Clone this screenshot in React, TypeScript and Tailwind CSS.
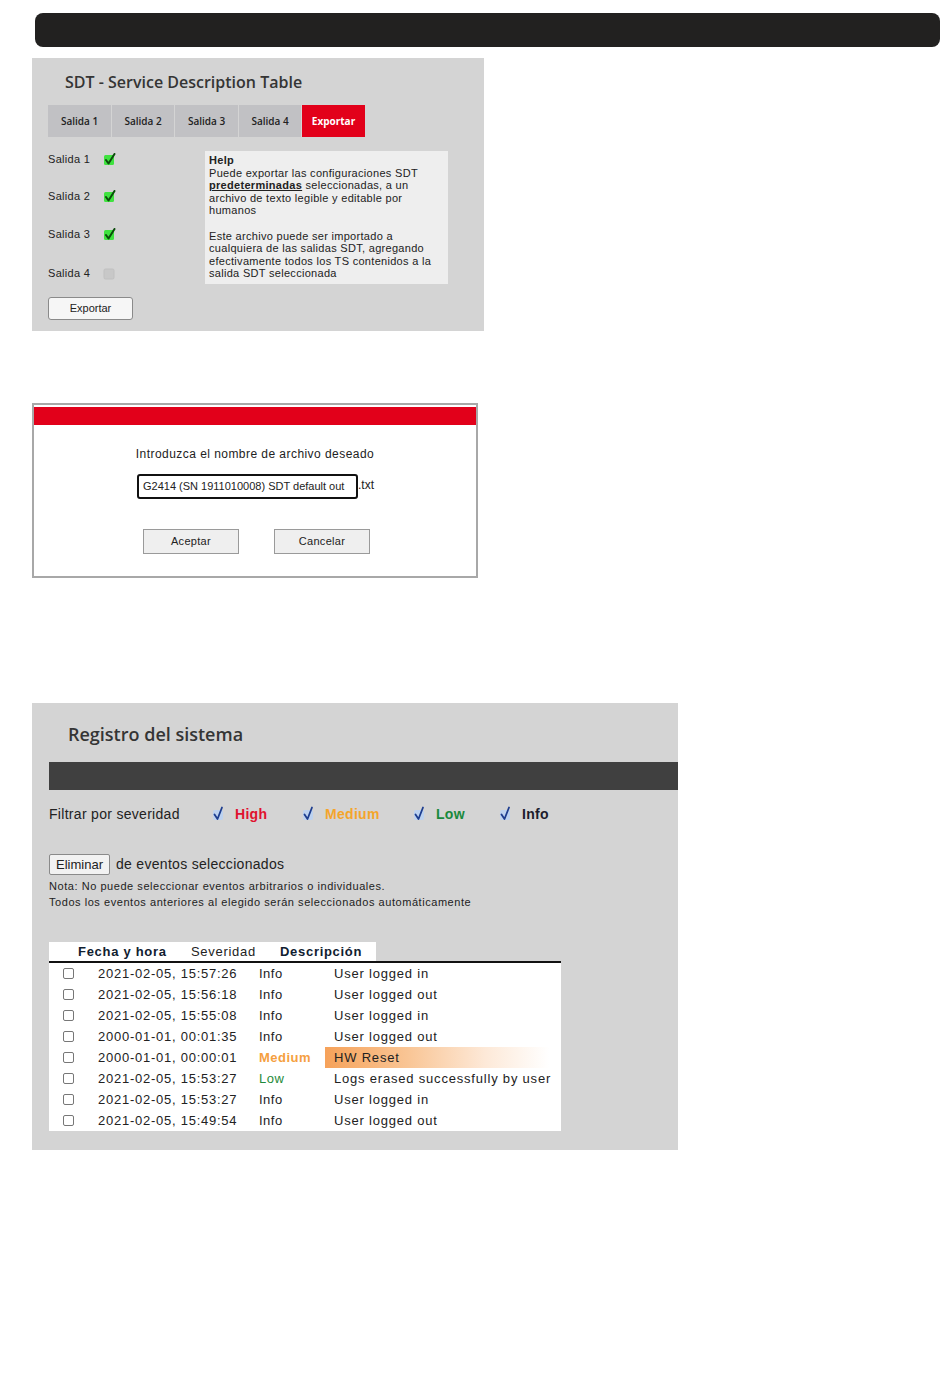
import React from 'react';

const body = "font-['Liberation_Sans',Arial,sans-serif]";
const heading = "font-['Open_Sans','Liberation_Sans',sans-serif]";

const GreenCheck: React.FC<{ on: boolean }> = ({ on }) => (
    <svg width="13" height="13" viewBox="0 0 13 13" className="shrink-0">
        {on ? (
            <>
                <rect x="1" y="2" width="10" height="10" rx="1.5" fill="#3fe23f" />
                <path d="M3 7 L5.5 10.5 L11.5 1" stroke="#0b4d0b" strokeWidth="2" fill="none" strokeLinecap="round" strokeLinejoin="round" />
            </>
        ) : (
            <rect x="1" y="2" width="10" height="10" rx="1.5" fill="#c8c8c8" stroke="#c0c0c0" />
        )}
    </svg>
);

const BlueCheck: React.FC = () => (
    <svg width="16" height="16" viewBox="0 0 16 16" className="shrink-0">
        <rect x="2" y="4" width="10" height="10" rx="2" fill="#bcd2f0" />
        <path d="M3.5 8.5 L6.5 13 L11 1.5" stroke="#1d3d8f" strokeWidth="1.8" fill="none" strokeLinecap="round" strokeLinejoin="round" />
    </svg>
);

const tabs = ['Salida 1', 'Salida 2', 'Salida 3', 'Salida 4'];

const salidas = [
    { name: 'Salida 1', on: true, h: 'h-[37px]' },
    { name: 'Salida 2', on: true, h: 'h-[37px]' },
    { name: 'Salida 3', on: true, h: 'h-[39px]' },
    { name: 'Salida 4', on: false, h: 'h-[38px]' },
];

const filters = [
    { label: 'High', color: 'text-[#e0122e]', w: 'w-[90px]' },
    { label: 'Medium', color: 'text-[#f5a52a]', w: 'w-[111px]' },
    { label: 'Low', color: 'text-[#1a8a3c]', w: 'w-[86px]' },
    { label: 'Info', color: 'text-[#1c1c2c]', w: 'w-[70px]' },
];

type Sev = 'Info' | 'Medium' | 'Low';

const events: { date: string; sev: Sev; desc: string }[] = [
    { date: '2021-02-05, 15:57:26', sev: 'Info', desc: 'User logged in' },
    { date: '2021-02-05, 15:56:18', sev: 'Info', desc: 'User logged out' },
    { date: '2021-02-05, 15:55:08', sev: 'Info', desc: 'User logged in' },
    { date: '2000-01-01, 00:01:35', sev: 'Info', desc: 'User logged out' },
    { date: '2000-01-01, 00:00:01', sev: 'Medium', desc: 'HW Reset' },
    { date: '2021-02-05, 15:53:27', sev: 'Low', desc: 'Logs erased successfully by user' },
    { date: '2021-02-05, 15:53:27', sev: 'Info', desc: 'User logged in' },
    { date: '2021-02-05, 15:49:54', sev: 'Info', desc: 'User logged out' },
];

const sevColor: Record<Sev, string> = {
    Info: 'text-[#222]',
    Medium: 'text-[#f5a040] font-bold',
    Low: 'text-[#1f8a3a]',
};

const SdtPanel: React.FC = () => (
    <div className="ml-[32px] w-[452px] h-[273px] bg-[#d4d4d4] pl-[16px] flex flex-col">
        <div className={`${heading} h-[47px] pl-[17px] pt-[13px] text-[16px] font-semibold text-[#353535] leading-[22px]`}>
            SDT - Service Description Table
        </div>
        <div className="flex h-[32px]">
            {tabs.map((t, i) => (
                <div
                    key={t}
                    className={`${heading} ${i === 1 || i === 3 ? 'w-[62px]' : 'w-[63px]'} mr-px bg-[#c1c1c4] flex items-center justify-center text-[10px] font-semibold text-[#222]`}
                >
                    {t}
                </div>
            ))}
            <div className={`${heading} w-[63px] bg-[#e2001a] flex items-center justify-center text-[10px] font-bold text-white`}>
                Exportar
            </div>
        </div>
        <div className="flex mt-[4px]">
            <div className="w-[157px] flex flex-col">
                {salidas.map(s => (
                    <div key={s.name} className={`${s.h} flex items-center gap-[13px] ${body} text-[11px] text-[#222] tracking-[0.3px]`}>
                        <span>{s.name}</span>
                        <GreenCheck on={s.on} />
                    </div>
                ))}
            </div>
            <div className={`mt-[10px] w-[243px] h-[133px] bg-[#eeeeee] px-[4px] pt-[3px] ${body} text-[11px] leading-[12.6px] text-[#222] tracking-[0.3px] whitespace-nowrap`}>
                <div className="font-bold">Help</div>
                <div>Puede exportar las configuraciones SDT</div>
                <div>
                    <span className="font-bold underline">predeterminadas</span> seleccionadas, a un
                </div>
                <div>archivo de texto legible y editable por</div>
                <div>humanos</div>
                <div className="h-[12.6px]" />
                <div>Este archivo puede ser importado a</div>
                <div>cualquiera de las salidas SDT, agregando</div>
                <div>efectivamente todos los TS contenidos a la</div>
                <div>salida SDT seleccionada</div>
            </div>
        </div>
        <button className={`mt-[5px] w-[85px] h-[23px] bg-[#f6f6f6] border border-[#8a8a8a] rounded-[3px] ${body} text-[11px] text-[#222]`}>
            Exportar
        </button>
    </div>
);

const FileDialog: React.FC = () => (
    <div className="mt-[72px] ml-[32px] w-[446px] h-[175px] border-2 border-[#a8a8a8] bg-white flex flex-col">
        <div className="mt-[2px] h-[18px] bg-[#e2001a]" />
        <div className={`mt-[20px] text-center ${body} text-[12px] text-[#222] tracking-[0.45px]`}>
            Introduzca el nombre de archivo deseado
        </div>
        <div className="mt-[11px] flex items-center pl-[103px]">
            <div className={`w-[221px] h-[25px] border-2 border-[#111] rounded-[3px] flex items-center pl-[4px] ${body} text-[11px] text-[#222] whitespace-nowrap overflow-hidden`}>
                G2414 (SN 1911010008) SDT default out
            </div>
            <span className={`${body} text-[12px] text-[#222] -mt-[3px]`}>.txt</span>
        </div>
        <div className="mt-[30px] flex pl-[109px] gap-[35px]">
            <button className={`w-[96px] h-[25px] bg-[#efefef] border border-[#9a9a9a] ${body} text-[11px] text-[#222] tracking-[0.3px]`}>Aceptar</button>
            <button className={`w-[96px] h-[25px] bg-[#efefef] border border-[#9a9a9a] ${body} text-[11px] text-[#222] tracking-[0.3px]`}>Cancelar</button>
        </div>
    </div>
);

const LogPanel: React.FC = () => (
    <div className="mt-[125px] ml-[32px] w-[646px] h-[447px] bg-[#d4d4d4] flex flex-col">
        <div className={`${heading} h-[59px] pl-[36px] pt-[19px] text-[18px] font-semibold text-[#353535] leading-[24px]`}>
            Registro del sistema
        </div>
        <div className="ml-[17px] h-[28px] bg-[#404040]" />
        <div className={`ml-[17px] mt-[14px] h-[20px] flex items-center ${body}`}>
            <span className="w-[162px] text-[14px] text-[#222] tracking-[0.3px]">Filtrar por severidad</span>
            {filters.map(f => (
                <div key={f.label} className={`${f.w} flex items-center gap-[8px]`}>
                    <BlueCheck />
                    <span className={`text-[14px] font-bold tracking-[0.3px] ${f.color}`}>{f.label}</span>
                </div>
            ))}
        </div>
        <div className={`ml-[17px] mt-[30px] flex items-center gap-[6px] ${body}`}>
            <button className="w-[61px] h-[21px] bg-[#f2f2f2] border border-[#8a8a8a] rounded-[2px] text-[13px] text-[#222]">Eliminar</button>
            <span className="text-[14px] text-[#222] tracking-[0.3px]">de eventos seleccionados</span>
        </div>
        <div className={`ml-[17px] mt-[3px] ${body} text-[11px] leading-[16px] text-[#222] tracking-[0.55px] whitespace-nowrap`}>
            <div>Nota: No puede seleccionar eventos arbitrarios o individuales.</div>
            <div>Todos los eventos anteriores al elegido serán seleccionados automáticamente</div>
        </div>
        <div className="ml-[17px] mt-[32px] w-[512px] flex flex-col">
            <div className={`w-[327px] h-[19px] bg-white flex items-center ${body} text-[13px] font-bold text-[#102030] tracking-[0.7px] whitespace-nowrap`}>
                <span className="ml-[29px] w-[113px]">Fecha y hora</span>
                <span className="w-[89px] font-normal text-[#222]">Severidad</span>
                <span>Descripción</span>
            </div>
            <div className="h-[2px] bg-[#111]" />
            <div className="bg-white">
                {events.map((e, i) => (
                    <div key={i} className={`h-[21px] flex items-center ${body} text-[13px] text-[#222] whitespace-nowrap`}>
                        <div className="w-[49px] flex pl-[14px]">
                            <div className="w-[11px] h-[11px] border border-[#777] rounded-[2px] bg-white" />
                        </div>
                        <span className="w-[161px] tracking-[0.75px]">{e.date}</span>
                        <span className={`w-[66px] tracking-[0.5px] ${sevColor[e.sev]}`}>{e.sev}</span>
                        <div
                            className={`flex-1 h-full flex items-center pl-[9px] tracking-[0.8px] ${
                                e.sev === 'Medium'
                                    ? 'bg-[linear-gradient(to_right,#f6a25a_0%,#f9c595_35%,#fde9d8_68%,#ffffff_95%)]'
                                    : ''
                            }`}
                        >
                            {e.desc}
                        </div>
                    </div>
                ))}
            </div>
        </div>
    </div>
);

const App: React.FC = () => {
    return (
        <div className="w-[950px] min-h-[1379px] bg-white pt-[13px]">
            <div className="ml-[35px] w-[905px] h-[34px] rounded-[8px] bg-[#222120]" />
            <div className="mt-[11px]">
                <SdtPanel />
            </div>
            <FileDialog />
            <LogPanel />
        </div>
    );
};

export default App;
